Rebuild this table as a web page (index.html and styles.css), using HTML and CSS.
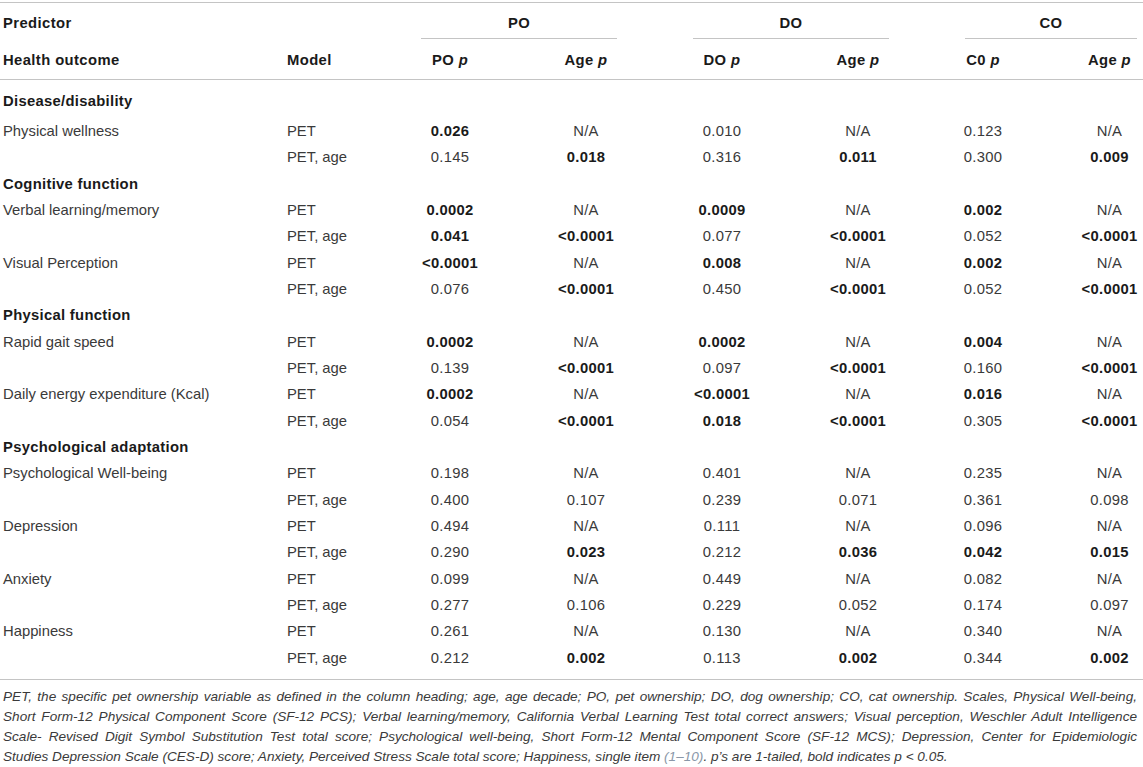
FILE: index.html
```html
<!DOCTYPE html>
<html lang="en">
<head>
<meta charset="utf-8">
<title>Table</title>
<link rel="stylesheet" href="styles.css">
</head>
<body>
<table class="data">
  <colgroup>
    <col class="c-outcome"><col class="c-model">
    <col class="c-wide"><col class="c-wide"><col class="c-wide"><col class="c-wide">
    <col class="c-co"><col class="c-coage">
  </colgroup>
  <thead>
    <tr class="head1">
      <th class="left">Predictor</th>
      <th></th>
      <th colspan="2" class="span"><div class="span-inner">PO</div></th>
      <th colspan="2" class="span"><div class="span-inner">DO</div></th>
      <th colspan="2" class="span"><div class="span-inner last">CO</div></th>
    </tr>
    <tr class="head2">
      <th class="left">Health outcome</th>
      <th class="left">Model</th>
      <th>PO <i>p</i></th>
      <th>Age <i>p</i></th>
      <th>DO <i>p</i></th>
      <th>Age <i>p</i></th>
      <th>C0 <i>p</i></th>
      <th class="lastcol">Age <i>p</i></th>
    </tr>
  </thead>
  <tbody>
    <tr class="group first"><td colspan="8">Disease/disability</td></tr>
    <tr><td class="left">Physical wellness</td><td class="left">PET</td><td><strong>0.026</strong></td><td>N/A</td><td>0.010</td><td>N/A</td><td>0.123</td><td class="lastcol">N/A</td></tr>
    <tr><td class="left"></td><td class="left">PET, age</td><td>0.145</td><td><strong>0.018</strong></td><td>0.316</td><td><strong>0.011</strong></td><td>0.300</td><td class="lastcol"><strong>0.009</strong></td></tr>

    <tr class="group"><td colspan="8">Cognitive function</td></tr>
    <tr><td class="left">Verbal learning/memory</td><td class="left">PET</td><td><strong>0.0002</strong></td><td>N/A</td><td><strong>0.0009</strong></td><td>N/A</td><td><strong>0.002</strong></td><td class="lastcol">N/A</td></tr>
    <tr><td class="left"></td><td class="left">PET, age</td><td><strong>0.041</strong></td><td><strong>&lt;0.0001</strong></td><td>0.077</td><td><strong>&lt;0.0001</strong></td><td>0.052</td><td class="lastcol"><strong>&lt;0.0001</strong></td></tr>
    <tr><td class="left">Visual Perception</td><td class="left">PET</td><td><strong>&lt;0.0001</strong></td><td>N/A</td><td><strong>0.008</strong></td><td>N/A</td><td><strong>0.002</strong></td><td class="lastcol">N/A</td></tr>
    <tr><td class="left"></td><td class="left">PET, age</td><td>0.076</td><td><strong>&lt;0.0001</strong></td><td>0.450</td><td><strong>&lt;0.0001</strong></td><td>0.052</td><td class="lastcol"><strong>&lt;0.0001</strong></td></tr>

    <tr class="group"><td colspan="8">Physical function</td></tr>
    <tr><td class="left">Rapid gait speed</td><td class="left">PET</td><td><strong>0.0002</strong></td><td>N/A</td><td><strong>0.0002</strong></td><td>N/A</td><td><strong>0.004</strong></td><td class="lastcol">N/A</td></tr>
    <tr><td class="left"></td><td class="left">PET, age</td><td>0.139</td><td><strong>&lt;0.0001</strong></td><td>0.097</td><td><strong>&lt;0.0001</strong></td><td>0.160</td><td class="lastcol"><strong>&lt;0.0001</strong></td></tr>
    <tr><td class="left">Daily energy expenditure (Kcal)</td><td class="left">PET</td><td><strong>0.0002</strong></td><td>N/A</td><td><strong>&lt;0.0001</strong></td><td>N/A</td><td><strong>0.016</strong></td><td class="lastcol">N/A</td></tr>
    <tr><td class="left"></td><td class="left">PET, age</td><td>0.054</td><td><strong>&lt;0.0001</strong></td><td><strong>0.018</strong></td><td><strong>&lt;0.0001</strong></td><td>0.305</td><td class="lastcol"><strong>&lt;0.0001</strong></td></tr>

    <tr class="group"><td colspan="8">Psychological adaptation</td></tr>
    <tr><td class="left">Psychological Well-being</td><td class="left">PET</td><td>0.198</td><td>N/A</td><td>0.401</td><td>N/A</td><td>0.235</td><td class="lastcol">N/A</td></tr>
    <tr><td class="left"></td><td class="left">PET, age</td><td>0.400</td><td>0.107</td><td>0.239</td><td>0.071</td><td>0.361</td><td class="lastcol">0.098</td></tr>
    <tr><td class="left">Depression</td><td class="left">PET</td><td>0.494</td><td>N/A</td><td>0.111</td><td>N/A</td><td>0.096</td><td class="lastcol">N/A</td></tr>
    <tr><td class="left"></td><td class="left">PET, age</td><td>0.290</td><td><strong>0.023</strong></td><td>0.212</td><td><strong>0.036</strong></td><td><strong>0.042</strong></td><td class="lastcol"><strong>0.015</strong></td></tr>
    <tr><td class="left">Anxiety</td><td class="left">PET</td><td>0.099</td><td>N/A</td><td>0.449</td><td>N/A</td><td>0.082</td><td class="lastcol">N/A</td></tr>
    <tr><td class="left"></td><td class="left">PET, age</td><td>0.277</td><td>0.106</td><td>0.229</td><td>0.052</td><td>0.174</td><td class="lastcol">0.097</td></tr>
    <tr><td class="left">Happiness</td><td class="left">PET</td><td>0.261</td><td>N/A</td><td>0.130</td><td>N/A</td><td>0.340</td><td class="lastcol">N/A</td></tr>
    <tr class="final"><td class="left"></td><td class="left">PET, age</td><td>0.212</td><td><strong>0.002</strong></td><td>0.113</td><td><strong>0.002</strong></td><td>0.344</td><td class="lastcol"><strong>0.002</strong></td></tr>
  </tbody>
</table>
<div class="footnote">
  <span class="fn-line">PET, the specific pet ownership variable as defined in the column heading; age, age decade; PO, pet ownership; DO, dog ownership; CO, cat ownership. Scales, Physical Well-being,</span>
  <span class="fn-line">Short Form-12 Physical Component Score (SF-12 PCS); Verbal learning/memory, California Verbal Learning Test total correct answers; Visual perception, Weschler Adult Intelligence</span>
  <span class="fn-line">Scale- Revised Digit Symbol Substitution Test total score; Psychological well-being, Short Form-12 Mental Component Score (SF-12 MCS); Depression, Center for Epidemiologic</span>
  <span class="fn-line fn-last">Studies Depression Scale (CES-D) score; Anxiety, Perceived Stress Scale total score; Happiness, single item <span class="ref">(1–10)</span>. p’s are 1-tailed, bold indicates p &lt; 0.05.</span>
</div>
</body>
</html>
```

FILE: styles.css
```css
html, body {
  margin: 0;
  padding: 0;
  background: #ffffff;
}

body {
  font-family: "Liberation Sans", Arial, Helvetica, sans-serif;
  font-size: 14.8px;
  line-height: 17px;
  color: #3a3a3a;
}

.data {
  width: 1143px;
  margin-top: 2px;
  border-collapse: collapse;
  table-layout: fixed;
  border-top: 1px solid #c4c4c4;
  border-bottom: 1px solid #c4c4c4;
}

.c-outcome { width: 284px; }
.c-model { width: 98px; }
.c-wide { width: 136px; }
.c-co { width: 114px; }
.c-coage { width: 103px; }

.data th,
.data td {
  padding: 6.2px 0 3.15px;
  text-align: center;
  vertical-align: top;
  white-space: nowrap;
  font-weight: normal;
  letter-spacing: 0.3px;
}

.data td.left {
  letter-spacing: 0;
}

.data th {
  font-weight: bold;
  color: #1a1a1a;
  letter-spacing: 0.4px;
}

.data .left {
  text-align: left;
  padding-left: 3px;
}

.data .lastcol {
  padding-left: 36px;
}

.head1 th {
  padding-top: 11.5px;
  padding-bottom: 7.5px;
}

.head1 th.span {
  padding: 0;
}

.span-inner {
  margin: 0 37px 0 39px;
  padding: 11.5px 0 6.5px;
  border-bottom: 1px solid #c4c4c4;
}

.span-inner.last {
  margin-right: 6px;
}

.head2 th {
  padding-top: 12.5px;
  padding-bottom: 10.5px;
  border-bottom: 1px solid #c4c4c4;
}

.group td {
  text-align: left;
  padding-left: 3px;
  font-weight: bold;
  color: #1a1a1a;
  letter-spacing: 0.3px;
}

.group.first td {
  padding-top: 12.5px;
  padding-bottom: 7.3px;
}

.final td {
  padding-bottom: 12.2px;
}

strong {
  font-weight: bold;
  color: #1a1a1a;
}

.footnote {
  padding: 7.5px 6px 0 3px;
  font-style: italic;
  font-size: 13.6px;
  line-height: 20px;
  color: #3a3a3a;
}

.fn-line {
  display: block;
  text-align: justify;
  text-align-last: justify;
}

.fn-line.fn-last {
  text-align-last: left;
}

.ref {
  color: #8a97a8;
}
```
